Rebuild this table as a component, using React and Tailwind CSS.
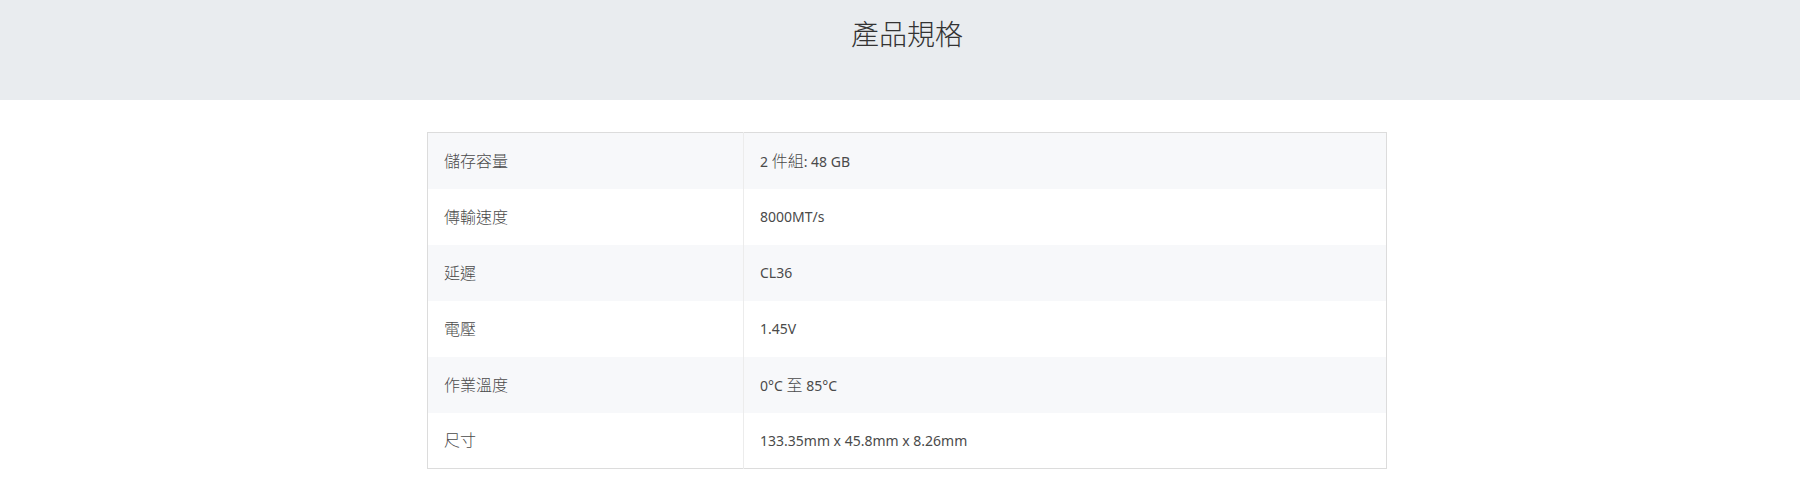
const specs = [
  ["儲存容量", "2 件組: 48 GB"],
  ["傳輸速度", "8000MT/s"],
  ["延遲", "CL36"],
  ["電壓", "1.45V"],
  ["作業溫度", "0°C 至 85°C"],
  ["尺寸", "133.35mm x 45.8mm x 8.26mm"],
];

// CJK glyphs sit a touch larger and lighter than the latin text in the reference
function Mixed({ text }) {
  return text.split(/([\u4e00-\u9fff]+)/).map((part, i) =>
    /[\u4e00-\u9fff]/.test(part) ? (
      <span key={i} className="text-[16px] font-light">{part}</span>
    ) : (
      part
    )
  );
}

export default function App() {
  return (
    <div className="min-h-[498px] bg-white font-['Noto_Sans','Noto_Sans_CJK_TC',sans-serif] text-[#4a4a4a]">
      <div className="bg-[#e9ecef] h-[100px] pl-[14px] pt-[13px]">
        <h2 className="text-center text-[28px] leading-[42px] text-[#333] font-light">產品規格</h2>
      </div>

      <div className="pl-[14px] pt-[32px]">
        <table className="mx-auto w-[960px] border border-[#dcdcdc] border-collapse text-[14px]">
          <tbody>
            {specs.map(([label, value], i) => (
              <tr key={label} className={i % 2 === 0 ? "bg-[#f7f8fa]" : "bg-white"}>
                <td className="w-[316px] h-[56px] px-4 border-r border-[#ececec] text-[16px] font-light">{label}</td>
                <td className="h-[56px] px-4">
                  <Mixed text={value} />
                </td>
              </tr>
            ))}
          </tbody>
        </table>
      </div>
    </div>
  );
}
